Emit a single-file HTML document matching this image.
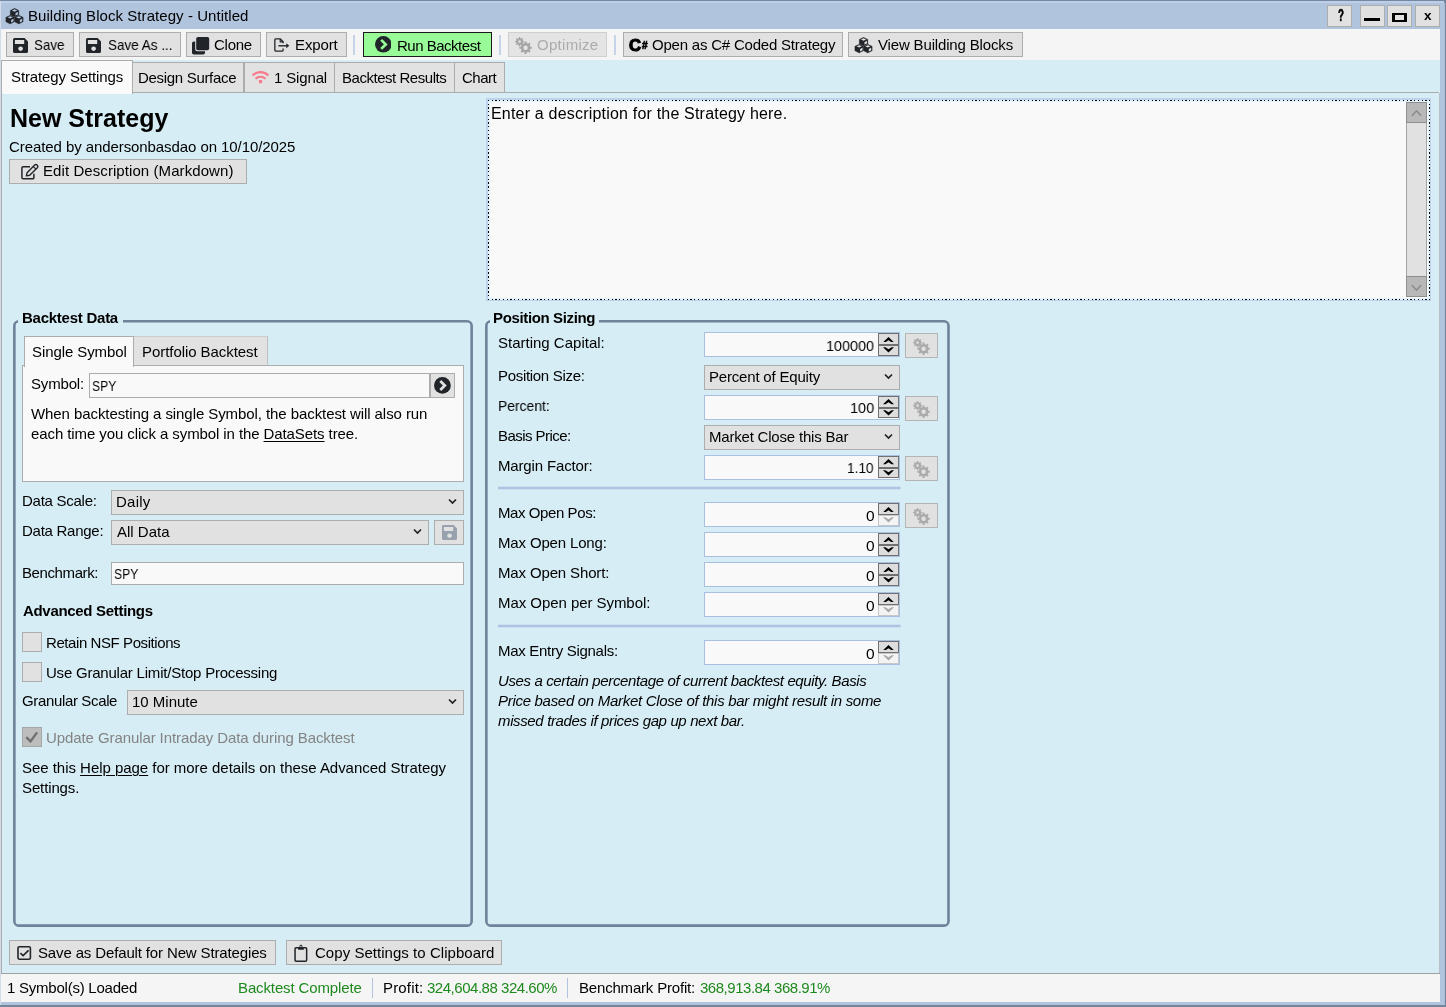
<!DOCTYPE html>
<html lang="en"><head><meta charset="utf-8"><title>Building Block Strategy - Untitled</title>
<style>
html,body{margin:0;padding:0;}
body{width:1446px;height:1007px;overflow:hidden;position:relative;background:#D6EDF5;font-family:"Liberation Sans",sans-serif;font-size:15px;color:#000;}
.b{position:absolute;box-sizing:border-box;}
.t{position:absolute;white-space:pre;will-change:transform;}
u{text-decoration:underline;text-underline-offset:2px;text-decoration-thickness:1px;}
</style></head><body>
<div class="b" style="left:0px;top:0px;width:1446px;height:1007px;background:#B0C4DE;"></div>
<div class="b" style="left:0px;top:0px;width:1446px;height:1px;background:#7388A3;"></div>
<div class="b" style="left:1px;top:1px;width:1444px;height:2px;background:#BDCEE6;"></div>
<div class="b" style="left:0px;top:1005px;width:1446px;height:2px;background:#74859B;"></div>
<div class="b" style="left:0px;top:1px;width:1px;height:1004px;background:#D3DCEA;"></div>
<div class="b" style="left:1444px;top:1px;width:1px;height:1004px;background:#A9BCD8;"></div>
<div class="b" style="left:1445px;top:1px;width:1px;height:1004px;background:#74859B;"></div>
<div class="b" style="left:1444px;top:0px;width:2px;height:3px;background:#74859B;"></div>
<div class="b" style="left:1px;top:29px;width:1439px;height:31px;background:#F5F5F5;"></div>
<div class="b" style="left:1px;top:60px;width:1439px;height:914px;background:#D6EDF5;"></div>
<div class="b" style="left:1px;top:974px;width:1439px;height:28px;background:#F5F5F5;"></div>
<div class="b" style="left:1px;top:973px;width:1439px;height:1px;background:#A0A0A0;"></div>
<svg class="b" style="left:5px;top:8.2px;" width="19" height="17" viewBox="0 0 19 17"><polygon points="9.55,0.30 13.85,2.40 13.85,6.90 9.55,9.00 5.25,6.90 5.25,2.40" fill="#212529" stroke="#212529" stroke-width="0.3" stroke-linejoin="round"/><polygon points="9.55,1.30 12.15,2.45 9.55,3.65 6.95,2.45" fill="#B0C4DE"/><polygon points="10.50,5.20 12.90,3.75 12.90,6.40 10.50,7.55" fill="#B0C4DE"/><polygon points="5.15,7.20 9.45,9.30 9.45,13.80 5.15,15.90 0.85,13.80 0.85,9.30" fill="#212529" stroke="#212529" stroke-width="0.3" stroke-linejoin="round"/><polygon points="5.15,8.20 7.75,9.35 5.15,10.55 2.55,9.35" fill="#B0C4DE"/><polygon points="6.10,12.10 8.50,10.65 8.50,13.30 6.10,14.45" fill="#B0C4DE"/><polygon points="13.85,7.20 18.15,9.30 18.15,13.80 13.85,15.90 9.55,13.80 9.55,9.30" fill="#212529" stroke="#212529" stroke-width="0.3" stroke-linejoin="round"/><polygon points="13.85,8.20 16.45,9.35 13.85,10.55 11.25,9.35" fill="#B0C4DE"/><polygon points="14.80,12.10 17.20,10.65 17.20,13.30 14.80,14.45" fill="#B0C4DE"/></svg>
<div class="b" style="left:1327px;top:5px;width:25px;height:22px;background:#E1E1E1;border:1px solid #ADADAD;"></div>
<div class="b" style="left:1360px;top:5px;width:25px;height:22px;background:#E1E1E1;border:1px solid #ADADAD;"></div>
<div class="b" style="left:1387px;top:5px;width:25px;height:22px;background:#E1E1E1;border:1px solid #ADADAD;"></div>
<div class="b" style="left:1415px;top:5px;width:25px;height:22px;background:#E1E1E1;border:1px solid #ADADAD;"></div>
<div class="b" style="left:1364px;top:18px;width:16px;height:3px;background:#000;"></div>
<div class="b" style="left:1392px;top:13px;width:15px;height:9px;border:3px solid #000;border-top-width:2.5px;border-bottom-width:2.5px;"></div>
<div class="b" style="left:6px;top:32px;width:68px;height:25px;background:#E1E1E1;border:1px solid #ADADAD;"></div>
<svg class="b" style="left:13px;top:37.9px;" width="15" height="15" viewBox="0 0 15 15"><path fill="#212529" fill-rule="evenodd" d="M1.6 0h10.000L15 3.400v10a1.6 1.6 0 0 1-1.6 1.6H1.6A1.6 1.6 0 0 1 0 13.400V1.6A1.6 1.6 0 0 1 1.600 0zM1.900 2.100v3.900h9.300v-3.900zM7.600 8.400a2.300 2.300 0 1 0 0.001 0z"/></svg>
<div class="b" style="left:79px;top:32px;width:102px;height:25px;background:#E1E1E1;border:1px solid #ADADAD;"></div>
<svg class="b" style="left:86px;top:37.9px;" width="15" height="15" viewBox="0 0 15 15"><path fill="#212529" fill-rule="evenodd" d="M1.6 0h10.000L15 3.400v10a1.6 1.6 0 0 1-1.6 1.6H1.6A1.6 1.6 0 0 1 0 13.400V1.6A1.6 1.6 0 0 1 1.600 0zM1.900 2.100v3.900h9.300v-3.900zM7.600 8.400a2.300 2.300 0 1 0 0.001 0z"/></svg>
<div class="b" style="left:186px;top:32px;width:75px;height:25px;background:#E1E1E1;border:1px solid #ADADAD;"></div>
<svg class="b" style="left:192px;top:36.6px;" width="18" height="18" viewBox="0 0 18 18"><rect x="0" y="4.500" width="13" height="13" rx="1.8" fill="#212529"/><rect x="3.200" y="-1" width="15.500" height="15.200" rx="2.2" fill="#E1E1E1"/><rect x="4.200" y="0" width="13" height="13.200" rx="1.8" fill="#212529"/></svg>
<div class="b" style="left:266px;top:32px;width:81px;height:25px;background:#E1E1E1;border:1px solid #ADADAD;"></div>
<svg class="b" style="left:273px;top:37px;" width="17" height="16" viewBox="0 0 17 16"><path fill="none" stroke="#212529" stroke-width="1.300" stroke-linejoin="round" d="M10.100 6.200V4.700L7.400 1.950H2.600a0.750 0.750 0 0 0-0.750 0.750V13.300a0.750 0.750 0 0 0 0.750 0.750h6.750a0.750 0.750 0 0 0 0.750-0.750V11.400"/><path fill="none" stroke="#212529" stroke-width="1.100" d="M7.200 2v2.900h2.900"/><path fill="none" stroke="#212529" stroke-width="1.400" d="M5.400 8.800h9"/><path fill="#212529" d="M13.300 6.300l3 2.500-3 2.500z"/></svg>
<div class="b" style="left:353px;top:35px;width:2px;height:20px;background:#C6D4E9;"></div>
<div class="b" style="left:363px;top:32px;width:129px;height:25px;background:#98FB98;border:1px solid #1A1A1A;"></div>
<svg class="b" style="left:374.6px;top:36.2px;" width="16.6" height="16.6" viewBox="0 0 16.6 16.6"><circle cx="8.300" cy="8.300" r="8.300" fill="#212529"/><path fill="none" stroke="#98FB98" stroke-width="2.700" d="M6.200 3.900l4.500 4.500-4.500 4.500"/></svg>
<div class="b" style="left:499px;top:35px;width:2px;height:20px;background:#C6D4E9;"></div>
<div class="b" style="left:508px;top:32px;width:99px;height:25px;background:#E4E4E4;border:1px solid #CFCFCF;"></div>
<svg class="b" style="left:515px;top:37px;" width="17" height="17" viewBox="0 0 17 17"><path fill="#A6A6A6" fill-rule="evenodd" d="M9.14 3.88 L9.14 5.32 L8.02 5.34 L7.54 6.50 L8.32 7.30 L7.30 8.32 L6.50 7.54 L5.34 8.02 L5.32 9.14 L3.88 9.14 L3.86 8.02 L2.70 7.54 L1.90 8.32 L0.88 7.30 L1.66 6.50 L1.18 5.34 L0.06 5.32 L0.06 3.88 L1.18 3.86 L1.66 2.70 L0.88 1.90 L1.90 0.88 L2.70 1.66 L3.86 1.18 L3.88 0.06 L5.32 0.06 L5.34 1.18 L6.50 1.66 L7.30 0.88 L8.32 1.90 L7.54 2.70 L8.02 3.86ZM5.90 4.60a1.3 1.3 0 1 0 -2.6 0a1.3 1.3 0 1 0 2.6 0Z"/><path fill="#A6A6A6" fill-rule="evenodd" d="M16.82 9.71 L16.82 11.69 L15.29 11.71 L14.63 13.30 L15.70 14.40 L14.30 15.80 L13.20 14.73 L11.61 15.39 L11.59 16.92 L9.61 16.92 L9.59 15.39 L8.00 14.73 L6.90 15.80 L5.50 14.40 L6.57 13.30 L5.91 11.71 L4.38 11.69 L4.38 9.71 L5.91 9.69 L6.57 8.10 L5.50 7.00 L6.90 5.60 L8.00 6.67 L9.59 6.01 L9.61 4.48 L11.59 4.48 L11.61 6.01 L13.20 6.67 L14.30 5.60 L15.70 7.00 L14.63 8.10 L15.29 9.69ZM12.80 10.70a2.2 2.2 0 1 0 -4.4 0a2.2 2.2 0 1 0 4.4 0Z"/></svg>
<div class="b" style="left:613.5px;top:35px;width:2px;height:20px;background:#C6D4E9;"></div>
<div class="b" style="left:623px;top:32px;width:220px;height:25px;background:#E1E1E1;border:1px solid #ADADAD;"></div>
<div class="b" style="left:848px;top:32px;width:175px;height:25px;background:#E1E1E1;border:1px solid #ADADAD;"></div>
<svg class="b" style="left:854px;top:37.2px;" width="19" height="17" viewBox="0 0 19 17"><polygon points="9.55,0.30 13.85,2.40 13.85,6.90 9.55,9.00 5.25,6.90 5.25,2.40" fill="#212529" stroke="#212529" stroke-width="0.3" stroke-linejoin="round"/><polygon points="9.55,1.30 12.15,2.45 9.55,3.65 6.95,2.45" fill="#E1E1E1"/><polygon points="10.50,5.20 12.90,3.75 12.90,6.40 10.50,7.55" fill="#E1E1E1"/><polygon points="5.15,7.20 9.45,9.30 9.45,13.80 5.15,15.90 0.85,13.80 0.85,9.30" fill="#212529" stroke="#212529" stroke-width="0.3" stroke-linejoin="round"/><polygon points="5.15,8.20 7.75,9.35 5.15,10.55 2.55,9.35" fill="#E1E1E1"/><polygon points="6.10,12.10 8.50,10.65 8.50,13.30 6.10,14.45" fill="#E1E1E1"/><polygon points="13.85,7.20 18.15,9.30 18.15,13.80 13.85,15.90 9.55,13.80 9.55,9.30" fill="#212529" stroke="#212529" stroke-width="0.3" stroke-linejoin="round"/><polygon points="13.85,8.20 16.45,9.35 13.85,10.55 11.25,9.35" fill="#E1E1E1"/><polygon points="14.80,12.10 17.20,10.65 17.20,13.30 14.80,14.45" fill="#E1E1E1"/></svg>
<div class="b" style="left:1px;top:92px;width:1438px;height:1px;background:#ACACAC;"></div>
<div class="b" style="left:132px;top:62px;width:112px;height:31px;background:#E2E2E2;border:1px solid #ACACAC;"></div>
<div class="b" style="left:244px;top:62px;width:91px;height:31px;background:#E2E2E2;border:1px solid #ACACAC;"></div>
<div class="b" style="left:334px;top:62px;width:121px;height:31px;background:#E2E2E2;border:1px solid #ACACAC;"></div>
<div class="b" style="left:454px;top:62px;width:51px;height:31px;background:#E2E2E2;border:1px solid #ACACAC;"></div>
<div class="b" style="left:1px;top:60px;width:132px;height:34px;background:#F9F9F9;border:1px solid #ACACAC;border-bottom:none;"></div>
<div class="b" style="left:1px;top:94px;width:1px;height:879px;background:#ACACAC;"></div>
<div class="b" style="left:1439px;top:93px;width:1px;height:880px;background:#B9BFC5;"></div>
<svg class="b" style="left:251px;top:69px;" width="19" height="15" viewBox="0 0 19 15"><g fill="none" stroke="#F7798C" stroke-linecap="butt"><path stroke-width="2.100" d="M1.600 6.400a11.100 11.100 0 0 1 15.800 0"/><path stroke-width="2.100" d="M4.500 9.800a7 7 0 0 1 10 0"/></g><rect x="7.900" y="10.900" width="3.200" height="3.300" rx="0.700" fill="#F7798C"/></svg>
<div class="b" style="left:9px;top:159px;width:238px;height:25px;background:#E1E1E1;border:1px solid #ADADAD;"></div>
<svg class="b" style="left:20px;top:163px;" width="19" height="17" viewBox="0 0 19 17"><path fill="none" stroke="#212529" stroke-width="1.500" stroke-linejoin="round" d="M10 3.700H3.100a1.200 1.200 0 0 0-1.200 1.200V14.500a1.200 1.200 0 0 0 1.200 1.200H12.700a1.200 1.200 0 0 0 1.200-1.200V10.800"/><path fill="none" stroke="#212529" stroke-width="1.400" stroke-linejoin="round" d="M6.400 12.900L7.100 9.700L14.700 2.100a1.840 1.840 0 0 1 2.600 2.600L9.700 12.300Z"/><path fill="none" stroke="#212529" stroke-width="1.100" d="M13.300 3.500l2.600 2.600"/></svg>
<div class="b" style="left:486px;top:98px;width:945px;height:203px;background:#BED2EB;"></div>
<div class="b" style="left:488px;top:100px;width:942px;height:200px;background:#E1F4FC;"></div>
<div class="b" style="left:490px;top:102px;width:938px;height:196px;background:#F9F9F9;"></div>
<div class="b" style="left:488px;top:100px;width:942px;height:1px;background:repeating-linear-gradient(90deg,#000 0 1.25px,transparent 1.25px 3.75px);"></div>
<div class="b" style="left:488px;top:299px;width:942px;height:1px;background:repeating-linear-gradient(90deg,#000 0 1.25px,transparent 1.25px 3.75px);"></div>
<div class="b" style="left:488px;top:100px;width:1px;height:200px;background:repeating-linear-gradient(180deg,#000 0 1.25px,transparent 1.25px 3.75px);"></div>
<div class="b" style="left:1429px;top:100px;width:1px;height:200px;background:repeating-linear-gradient(180deg,#000 0 1.25px,transparent 1.25px 3.75px);"></div>
<div class="b" style="left:1406px;top:102px;width:21px;height:195px;background:#E1E1E1;border:1px solid #A3A3A3;"></div>
<div class="b" style="left:1406px;top:102px;width:21px;height:21px;background:#B8B8B8;border:1px solid #8F8F8F;"></div>
<div class="b" style="left:1406px;top:276px;width:21px;height:21px;background:#B8B8B8;border:1px solid #8F8F8F;"></div>
<svg class="b" style="left:1411px;top:109px;" width="11" height="8" viewBox="0 0 11 8"><path fill="none" stroke="#8A8A8A" stroke-width="1.400" d="M1 6.800l4.500-5 4.500 5"/></svg>
<svg class="b" style="left:1411px;top:283.5px;" width="11" height="8" viewBox="0 0 11 8"><path fill="none" stroke="#8A8A8A" stroke-width="1.400" d="M1 1.200l4.500 5 4.500-5"/></svg>
<svg class="b" style="left:11px;top:318px;" width="464" height="611" viewBox="0 0 464 611"><rect x="3.35" y="3.25" width="457.30" height="604.40" rx="4.5" fill="none" stroke="#70829A" stroke-width="2.600"/></svg>
<div class="b" style="left:18px;top:312px;width:105px;height:20px;background:#D6EDF5;"></div>
<svg class="b" style="left:483px;top:318px;" width="469" height="611" viewBox="0 0 469 611"><rect x="3.35" y="3.25" width="462.15" height="604.40" rx="4.5" fill="none" stroke="#70829A" stroke-width="2.600"/></svg>
<div class="b" style="left:490px;top:312px;width:109px;height:20px;background:#D6EDF5;"></div>
<div class="b" style="left:22px;top:365px;width:442px;height:117px;background:#F9F9F9;border:1px solid #ACACAC;"></div>
<div class="b" style="left:133px;top:336px;width:135px;height:30px;background:#E2E2E2;border:1px solid #C0C0C0;border-bottom-color:#ACACAC;border-top-color:#C8CDD0;"></div>
<div class="b" style="left:24px;top:336px;width:110px;height:31px;background:#F9F9F9;border:1px solid #ACACAC;border-bottom:none;"></div>
<div class="b" style="left:89px;top:373px;width:341px;height:25px;background:#F9F9F9;border:1px solid #ACACAC;"></div>
<div class="b" style="left:430px;top:373px;width:25px;height:25px;background:#E1E1E1;border:1px solid #ADADAD;"></div>
<svg class="b" style="left:434.4px;top:377.4px;" width="16.8" height="16.8" viewBox="0 0 16.6 16.6"><circle cx="8.300" cy="8.300" r="8.300" fill="#212529"/><path fill="none" stroke="#E1E1E1" stroke-width="2.700" d="M6.200 3.900l4.500 4.500-4.500 4.500"/></svg>
<div class="b" style="left:111px;top:490px;width:353px;height:25px;background:#E1E1E1;border:1px solid #ADADAD;"></div>
<svg class="b" style="left:448px;top:498px;" width="9" height="7" viewBox="0 0 9 7"><path fill="none" stroke="#222" stroke-width="1.700" d="M1 1.500l3.500 3.500 3.500-3.500"/></svg>
<div class="b" style="left:111px;top:520px;width:318px;height:25px;background:#E1E1E1;border:1px solid #ADADAD;"></div>
<svg class="b" style="left:413px;top:528px;" width="9" height="7" viewBox="0 0 9 7"><path fill="none" stroke="#222" stroke-width="1.700" d="M1 1.500l3.500 3.500 3.500-3.500"/></svg>
<div class="b" style="left:434px;top:520px;width:30px;height:25px;background:#E1E1E1;border:1px solid #ADADAD;"></div>
<svg class="b" style="left:441.5px;top:524.5px;" width="15" height="15" viewBox="0 0 15 15"><path fill="#98A2AE" fill-rule="evenodd" d="M1.6 0h10.000L15 3.400v10a1.6 1.6 0 0 1-1.6 1.6H1.6A1.6 1.6 0 0 1 0 13.400V1.6A1.6 1.6 0 0 1 1.600 0zM1.900 2.100v3.900h9.300v-3.900zM7.600 8.400a2.300 2.300 0 1 0 0.001 0z"/></svg>
<div class="b" style="left:111px;top:562px;width:353px;height:23px;background:#F9F9F9;border:1px solid #ACACAC;"></div>
<div class="b" style="left:22px;top:632px;width:20px;height:20px;background:#E1E1E1;border:1px solid #ADADAD;"></div>
<div class="b" style="left:22px;top:662px;width:20px;height:20px;background:#E1E1E1;border:1px solid #ADADAD;"></div>
<div class="b" style="left:127px;top:690px;width:337px;height:25px;background:#E1E1E1;border:1px solid #ADADAD;"></div>
<svg class="b" style="left:448px;top:698px;" width="9" height="7" viewBox="0 0 9 7"><path fill="none" stroke="#222" stroke-width="1.700" d="M1 1.500l3.500 3.500 3.500-3.500"/></svg>
<div class="b" style="left:22px;top:727px;width:20px;height:20px;background:#BDBDBD;border:1px solid #A6A6A6;"></div>
<svg class="b" style="left:25px;top:731px;" width="14" height="12" viewBox="0 0 14 12"><path fill="none" stroke="#707070" stroke-width="2.400" d="M1.300 6.200l4.200 4.200 6.600-9"/></svg>
<div class="b" style="left:704px;top:332px;width:196px;height:25px;background:#F9F9F9;border:1px solid #A9C0E0;"></div>
<div class="b" style="left:878px;top:333px;width:21px;height:12px;background:#DDDDDD;border:1px solid #707070;"></div>
<div class="b" style="left:878px;top:345px;width:21px;height:11px;background:#DDDDDD;border:1px solid #707070;"></div>
<svg class="b" style="left:883px;top:336.7px;" width="11" height="5.5" viewBox="0 0 11 5.5"><path fill="#000" d="M0 5.300L5.500 0L11 5.300H8.600L5.500 3.200L2.400 5.300Z"/></svg>
<svg class="b" style="left:883px;top:347px;" width="11" height="5.5" viewBox="0 0 11 5.5"><path fill="#000" d="M0 0.200L5.500 5.500L11 0.200H8.600L5.500 2.300L2.400 0.200Z"/></svg>
<div class="b" style="left:905px;top:333px;width:33px;height:25px;background:#E1E1E1;border:1px solid #B4B4B4;"></div>
<svg class="b" style="left:913px;top:337.5px;" width="17" height="17" viewBox="0 0 17 17"><path fill="#ABABAB" fill-rule="evenodd" d="M9.14 3.88 L9.14 5.32 L8.02 5.34 L7.54 6.50 L8.32 7.30 L7.30 8.32 L6.50 7.54 L5.34 8.02 L5.32 9.14 L3.88 9.14 L3.86 8.02 L2.70 7.54 L1.90 8.32 L0.88 7.30 L1.66 6.50 L1.18 5.34 L0.06 5.32 L0.06 3.88 L1.18 3.86 L1.66 2.70 L0.88 1.90 L1.90 0.88 L2.70 1.66 L3.86 1.18 L3.88 0.06 L5.32 0.06 L5.34 1.18 L6.50 1.66 L7.30 0.88 L8.32 1.90 L7.54 2.70 L8.02 3.86ZM5.90 4.60a1.3 1.3 0 1 0 -2.6 0a1.3 1.3 0 1 0 2.6 0Z"/><path fill="#ABABAB" fill-rule="evenodd" d="M16.82 9.71 L16.82 11.69 L15.29 11.71 L14.63 13.30 L15.70 14.40 L14.30 15.80 L13.20 14.73 L11.61 15.39 L11.59 16.92 L9.61 16.92 L9.59 15.39 L8.00 14.73 L6.90 15.80 L5.50 14.40 L6.57 13.30 L5.91 11.71 L4.38 11.69 L4.38 9.71 L5.91 9.69 L6.57 8.10 L5.50 7.00 L6.90 5.60 L8.00 6.67 L9.59 6.01 L9.61 4.48 L11.59 4.48 L11.61 6.01 L13.20 6.67 L14.30 5.60 L15.70 7.00 L14.63 8.10 L15.29 9.69ZM12.80 10.70a2.2 2.2 0 1 0 -4.4 0a2.2 2.2 0 1 0 4.4 0Z"/></svg>
<div class="b" style="left:704px;top:365px;width:196px;height:25px;background:#E1E1E1;border:1px solid #ADADAD;"></div>
<svg class="b" style="left:884px;top:373px;" width="9" height="7" viewBox="0 0 9 7"><path fill="none" stroke="#222" stroke-width="1.700" d="M1 1.500l3.500 3.500 3.500-3.500"/></svg>
<div class="b" style="left:704px;top:395px;width:196px;height:25px;background:#F9F9F9;border:1px solid #A9C0E0;"></div>
<div class="b" style="left:878px;top:396px;width:21px;height:12px;background:#DDDDDD;border:1px solid #707070;"></div>
<div class="b" style="left:878px;top:407px;width:21px;height:11px;background:#DDDDDD;border:1px solid #707070;border-top-width:2px;"></div>
<svg class="b" style="left:883px;top:399.2px;" width="11" height="5.5" viewBox="0 0 11 5.5"><path fill="#000" d="M0 5.300L5.500 0L11 5.300H8.600L5.500 3.200L2.400 5.300Z"/></svg>
<svg class="b" style="left:883px;top:410.2px;" width="11" height="5.5" viewBox="0 0 11 5.5"><path fill="#000" d="M0 0.200L5.500 5.500L11 0.200H8.600L5.500 2.300L2.400 0.200Z"/></svg>
<div class="b" style="left:905px;top:396px;width:33px;height:25px;background:#E1E1E1;border:1px solid #B4B4B4;"></div>
<svg class="b" style="left:913px;top:400.5px;" width="17" height="17" viewBox="0 0 17 17"><path fill="#ABABAB" fill-rule="evenodd" d="M9.14 3.88 L9.14 5.32 L8.02 5.34 L7.54 6.50 L8.32 7.30 L7.30 8.32 L6.50 7.54 L5.34 8.02 L5.32 9.14 L3.88 9.14 L3.86 8.02 L2.70 7.54 L1.90 8.32 L0.88 7.30 L1.66 6.50 L1.18 5.34 L0.06 5.32 L0.06 3.88 L1.18 3.86 L1.66 2.70 L0.88 1.90 L1.90 0.88 L2.70 1.66 L3.86 1.18 L3.88 0.06 L5.32 0.06 L5.34 1.18 L6.50 1.66 L7.30 0.88 L8.32 1.90 L7.54 2.70 L8.02 3.86ZM5.90 4.60a1.3 1.3 0 1 0 -2.6 0a1.3 1.3 0 1 0 2.6 0Z"/><path fill="#ABABAB" fill-rule="evenodd" d="M16.82 9.71 L16.82 11.69 L15.29 11.71 L14.63 13.30 L15.70 14.40 L14.30 15.80 L13.20 14.73 L11.61 15.39 L11.59 16.92 L9.61 16.92 L9.59 15.39 L8.00 14.73 L6.90 15.80 L5.50 14.40 L6.57 13.30 L5.91 11.71 L4.38 11.69 L4.38 9.71 L5.91 9.69 L6.57 8.10 L5.50 7.00 L6.90 5.60 L8.00 6.67 L9.59 6.01 L9.61 4.48 L11.59 4.48 L11.61 6.01 L13.20 6.67 L14.30 5.60 L15.70 7.00 L14.63 8.10 L15.29 9.69ZM12.80 10.70a2.2 2.2 0 1 0 -4.4 0a2.2 2.2 0 1 0 4.4 0Z"/></svg>
<div class="b" style="left:704px;top:425px;width:196px;height:25px;background:#E1E1E1;border:1px solid #ADADAD;"></div>
<svg class="b" style="left:884px;top:433px;" width="9" height="7" viewBox="0 0 9 7"><path fill="none" stroke="#222" stroke-width="1.700" d="M1 1.500l3.500 3.500 3.500-3.500"/></svg>
<div class="b" style="left:704px;top:455px;width:196px;height:25px;background:#F9F9F9;border:1px solid #A9C0E0;"></div>
<div class="b" style="left:878px;top:456px;width:21px;height:12px;background:#DDDDDD;border:1px solid #707070;"></div>
<div class="b" style="left:878px;top:467px;width:21px;height:11px;background:#DDDDDD;border:1px solid #707070;border-top-width:2px;"></div>
<svg class="b" style="left:883px;top:459.2px;" width="11" height="5.5" viewBox="0 0 11 5.5"><path fill="#000" d="M0 5.300L5.500 0L11 5.300H8.600L5.500 3.200L2.400 5.300Z"/></svg>
<svg class="b" style="left:883px;top:470.2px;" width="11" height="5.5" viewBox="0 0 11 5.5"><path fill="#000" d="M0 0.200L5.500 5.500L11 0.200H8.600L5.500 2.300L2.400 0.200Z"/></svg>
<div class="b" style="left:905px;top:456px;width:33px;height:25px;background:#E1E1E1;border:1px solid #B4B4B4;"></div>
<svg class="b" style="left:913px;top:460.5px;" width="17" height="17" viewBox="0 0 17 17"><path fill="#ABABAB" fill-rule="evenodd" d="M9.14 3.88 L9.14 5.32 L8.02 5.34 L7.54 6.50 L8.32 7.30 L7.30 8.32 L6.50 7.54 L5.34 8.02 L5.32 9.14 L3.88 9.14 L3.86 8.02 L2.70 7.54 L1.90 8.32 L0.88 7.30 L1.66 6.50 L1.18 5.34 L0.06 5.32 L0.06 3.88 L1.18 3.86 L1.66 2.70 L0.88 1.90 L1.90 0.88 L2.70 1.66 L3.86 1.18 L3.88 0.06 L5.32 0.06 L5.34 1.18 L6.50 1.66 L7.30 0.88 L8.32 1.90 L7.54 2.70 L8.02 3.86ZM5.90 4.60a1.3 1.3 0 1 0 -2.6 0a1.3 1.3 0 1 0 2.6 0Z"/><path fill="#ABABAB" fill-rule="evenodd" d="M16.82 9.71 L16.82 11.69 L15.29 11.71 L14.63 13.30 L15.70 14.40 L14.30 15.80 L13.20 14.73 L11.61 15.39 L11.59 16.92 L9.61 16.92 L9.59 15.39 L8.00 14.73 L6.90 15.80 L5.50 14.40 L6.57 13.30 L5.91 11.71 L4.38 11.69 L4.38 9.71 L5.91 9.69 L6.57 8.10 L5.50 7.00 L6.90 5.60 L8.00 6.67 L9.59 6.01 L9.61 4.48 L11.59 4.48 L11.61 6.01 L13.20 6.67 L14.30 5.60 L15.70 7.00 L14.63 8.10 L15.29 9.69ZM12.80 10.70a2.2 2.2 0 1 0 -4.4 0a2.2 2.2 0 1 0 4.4 0Z"/></svg>
<svg class="b" style="left:498px;top:485.4px;" width="403" height="6" viewBox="0 0 403 6"><line x1="0" y1="3" x2="402.5" y2="3" stroke="#AEC3E1" stroke-width="2.300"/></svg>
<div class="b" style="left:704px;top:502px;width:196px;height:25px;background:#F9F9F9;border:1px solid #A9C0E0;"></div>
<div class="b" style="left:878px;top:503px;width:21px;height:12px;background:#DDDDDD;border:1px solid #707070;"></div>
<div class="b" style="left:878px;top:515px;width:21px;height:11px;background:#F4F4F4;border:1px solid #C4C8CC;"></div>
<svg class="b" style="left:883px;top:506.7px;" width="11" height="5.5" viewBox="0 0 11 5.5"><path fill="#000" d="M0 5.300L5.500 0L11 5.300H8.600L5.500 3.200L2.400 5.300Z"/></svg>
<svg class="b" style="left:883px;top:517px;" width="11" height="5.5" viewBox="0 0 11 5.5"><path fill="#A9A9A9" d="M0 0.200L5.500 5.500L11 0.200H8.600L5.500 2.300L2.400 0.200Z"/></svg>
<div class="b" style="left:905px;top:503px;width:33px;height:25px;background:#E1E1E1;border:1px solid #B4B4B4;"></div>
<svg class="b" style="left:913px;top:507.5px;" width="17" height="17" viewBox="0 0 17 17"><path fill="#ABABAB" fill-rule="evenodd" d="M9.14 3.88 L9.14 5.32 L8.02 5.34 L7.54 6.50 L8.32 7.30 L7.30 8.32 L6.50 7.54 L5.34 8.02 L5.32 9.14 L3.88 9.14 L3.86 8.02 L2.70 7.54 L1.90 8.32 L0.88 7.30 L1.66 6.50 L1.18 5.34 L0.06 5.32 L0.06 3.88 L1.18 3.86 L1.66 2.70 L0.88 1.90 L1.90 0.88 L2.70 1.66 L3.86 1.18 L3.88 0.06 L5.32 0.06 L5.34 1.18 L6.50 1.66 L7.30 0.88 L8.32 1.90 L7.54 2.70 L8.02 3.86ZM5.90 4.60a1.3 1.3 0 1 0 -2.6 0a1.3 1.3 0 1 0 2.6 0Z"/><path fill="#ABABAB" fill-rule="evenodd" d="M16.82 9.71 L16.82 11.69 L15.29 11.71 L14.63 13.30 L15.70 14.40 L14.30 15.80 L13.20 14.73 L11.61 15.39 L11.59 16.92 L9.61 16.92 L9.59 15.39 L8.00 14.73 L6.90 15.80 L5.50 14.40 L6.57 13.30 L5.91 11.71 L4.38 11.69 L4.38 9.71 L5.91 9.69 L6.57 8.10 L5.50 7.00 L6.90 5.60 L8.00 6.67 L9.59 6.01 L9.61 4.48 L11.59 4.48 L11.61 6.01 L13.20 6.67 L14.30 5.60 L15.70 7.00 L14.63 8.10 L15.29 9.69ZM12.80 10.70a2.2 2.2 0 1 0 -4.4 0a2.2 2.2 0 1 0 4.4 0Z"/></svg>
<div class="b" style="left:704px;top:532px;width:196px;height:25px;background:#F9F9F9;border:1px solid #A9C0E0;"></div>
<div class="b" style="left:878px;top:533px;width:21px;height:12px;background:#DDDDDD;border:1px solid #707070;"></div>
<div class="b" style="left:878px;top:545px;width:21px;height:11px;background:#DDDDDD;border:1px solid #707070;"></div>
<svg class="b" style="left:883px;top:536.7px;" width="11" height="5.5" viewBox="0 0 11 5.5"><path fill="#000" d="M0 5.300L5.500 0L11 5.300H8.600L5.500 3.200L2.400 5.300Z"/></svg>
<svg class="b" style="left:883px;top:547px;" width="11" height="5.5" viewBox="0 0 11 5.5"><path fill="#000" d="M0 0.200L5.500 5.500L11 0.200H8.600L5.500 2.300L2.400 0.200Z"/></svg>
<div class="b" style="left:704px;top:562px;width:196px;height:25px;background:#F9F9F9;border:1px solid #A9C0E0;"></div>
<div class="b" style="left:878px;top:563px;width:21px;height:12px;background:#DDDDDD;border:1px solid #707070;"></div>
<div class="b" style="left:878px;top:575px;width:21px;height:11px;background:#DDDDDD;border:1px solid #707070;"></div>
<svg class="b" style="left:883px;top:566.7px;" width="11" height="5.5" viewBox="0 0 11 5.5"><path fill="#000" d="M0 5.300L5.500 0L11 5.300H8.600L5.500 3.200L2.400 5.300Z"/></svg>
<svg class="b" style="left:883px;top:577px;" width="11" height="5.5" viewBox="0 0 11 5.5"><path fill="#000" d="M0 0.200L5.500 5.500L11 0.200H8.600L5.500 2.300L2.400 0.200Z"/></svg>
<div class="b" style="left:704px;top:592px;width:196px;height:25px;background:#F9F9F9;border:1px solid #A9C0E0;"></div>
<div class="b" style="left:878px;top:593px;width:21px;height:12px;background:#DDDDDD;border:1px solid #707070;"></div>
<div class="b" style="left:878px;top:605px;width:21px;height:11px;background:#F4F4F4;border:1px solid #C4C8CC;"></div>
<svg class="b" style="left:883px;top:596.7px;" width="11" height="5.5" viewBox="0 0 11 5.5"><path fill="#000" d="M0 5.300L5.500 0L11 5.300H8.600L5.500 3.200L2.400 5.300Z"/></svg>
<svg class="b" style="left:883px;top:607px;" width="11" height="5.5" viewBox="0 0 11 5.5"><path fill="#A9A9A9" d="M0 0.200L5.500 5.500L11 0.200H8.600L5.500 2.300L2.400 0.200Z"/></svg>
<svg class="b" style="left:498px;top:622.6px;" width="403" height="6" viewBox="0 0 403 6"><line x1="0" y1="3" x2="402.5" y2="3" stroke="#AEC3E1" stroke-width="2.300"/></svg>
<div class="b" style="left:704px;top:640px;width:196px;height:25px;background:#F9F9F9;border:1px solid #A9C0E0;"></div>
<div class="b" style="left:878px;top:641px;width:21px;height:12px;background:#DDDDDD;border:1px solid #707070;"></div>
<div class="b" style="left:878px;top:653px;width:21px;height:11px;background:#F4F4F4;border:1px solid #C4C8CC;"></div>
<svg class="b" style="left:883px;top:644.7px;" width="11" height="5.5" viewBox="0 0 11 5.5"><path fill="#000" d="M0 5.300L5.500 0L11 5.300H8.600L5.500 3.200L2.400 5.300Z"/></svg>
<svg class="b" style="left:883px;top:655px;" width="11" height="5.5" viewBox="0 0 11 5.5"><path fill="#A9A9A9" d="M0 0.200L5.500 5.500L11 0.200H8.600L5.500 2.300L2.400 0.200Z"/></svg>
<div class="b" style="left:9px;top:940px;width:267px;height:25px;background:#E1E1E1;border:1px solid #ADADAD;"></div>
<svg class="b" style="left:17px;top:946px;" width="15" height="15" viewBox="0 0 15 15"><rect x="1.000" y="0.800" width="12.400" height="12.400" rx="1.400" fill="none" stroke="#212529" stroke-width="1.600"/><path fill="none" stroke="#212529" stroke-width="1.700" d="M3.400 7.200l2.700 2.400 5.400-5.200"/></svg>
<div class="b" style="left:286px;top:940px;width:216px;height:25px;background:#E1E1E1;border:1px solid #ADADAD;"></div>
<svg class="b" style="left:293px;top:944px;" width="16" height="19" viewBox="0 0 16 19"><rect x="2.050" y="3.650" width="11.600" height="13.500" rx="1.100" fill="none" stroke="#212529" stroke-width="1.500"/><path fill="#212529" fill-rule="evenodd" d="M5.100 5.800V3.500h1.400V2.300a1.450 1.450 0 0 1 2.900 0V3.500h1.400V5.800zM7.950 1.700a0.700 0.700 0 1 0 0.001 0z"/></svg>
<div class="b" style="left:372px;top:978px;width:1px;height:20px;background:#B0C4DE;"></div>
<div class="b" style="left:567px;top:978px;width:1px;height:20px;background:#B0C4DE;"></div>
<span class="t" style="left:28px;top:6px;font-size:15px;line-height:20px;letter-spacing:0.061px;">Building Block Strategy - Untitled</span>
<span class="t" style="left:1338.0px;top:5px;font-size:17px;line-height:22px;font-weight:bold;transform:scaleX(0.57);transform-origin:0 0;-webkit-text-stroke:0.7px #000;">?</span>
<span class="t" style="left:1424px;top:7px;font-size:13.5px;line-height:18.5px;font-weight:bold;">x</span>
<span class="t" style="left:34.11px;top:35px;font-size:15px;line-height:20px;transform:scaleX(0.8939);transform-origin:0 0;">Save</span>
<span class="t" style="left:108.1px;top:35px;font-size:15px;line-height:20px;transform:scaleX(0.9);transform-origin:0 0;">Save As ...</span>
<span class="t" style="left:214px;top:35px;font-size:15px;line-height:20px;letter-spacing:-0.25px;">Clone</span>
<span class="t" style="left:295px;top:35px;font-size:15px;line-height:20px;letter-spacing:-0.12px;">Export</span>
<span class="t" style="left:397px;top:36px;font-size:15px;line-height:20px;letter-spacing:-0.491px;">Run Backtest</span>
<span class="t" style="left:537px;top:35px;font-size:15px;line-height:20px;letter-spacing:0.285px;color:#ABABAB;">Optimize</span>
<span class="t" style="left:629px;top:35px;font-size:16.5px;line-height:21.5px;font-weight:bold;-webkit-text-stroke:1.2px #000;">C</span>
<span class="t" style="left:642px;top:38px;font-size:10px;line-height:15px;font-weight:bold;-webkit-text-stroke:0.6px #000;">#</span>
<span class="t" style="left:652px;top:35px;font-size:15px;line-height:20px;letter-spacing:-0.208px;">Open as C# Coded Strategy</span>
<span class="t" style="left:878px;top:35px;font-size:15px;line-height:20px;letter-spacing:-0.158px;">View Building Blocks</span>
<span class="t" style="left:11px;top:67px;font-size:15px;line-height:20px;letter-spacing:-0.125px;">Strategy Settings</span>
<span class="t" style="left:138px;top:68px;font-size:15px;line-height:20px;letter-spacing:-0.308px;">Design Surface</span>
<span class="t" style="left:274px;top:68px;font-size:15px;line-height:20px;letter-spacing:-0.143px;">1 Signal</span>
<span class="t" style="left:342px;top:68px;font-size:15px;line-height:20px;letter-spacing:-0.466px;">Backtest Results</span>
<span class="t" style="left:462px;top:68px;font-size:15px;line-height:20px;letter-spacing:-0.5px;">Chart</span>
<span class="t" style="left:10px;top:103px;font-size:25px;line-height:30px;font-weight:bold;">New Strategy</span>
<span class="t" style="left:9px;top:137px;font-size:15px;line-height:20px;letter-spacing:-0.079px;">Created by andersonbasdao on 10/10/2025</span>
<span class="t" style="left:43px;top:161px;font-size:15px;line-height:20px;letter-spacing:0.077px;">Edit Description (Markdown)</span>
<span class="t" style="left:491px;top:103px;font-size:16px;line-height:21px;letter-spacing:0.195px;">Enter a description for the Strategy here.</span>
<span class="t" style="left:22px;top:308px;font-size:15px;line-height:20px;letter-spacing:-0.25px;font-weight:bold;">Backtest Data</span>
<span class="t" style="left:493px;top:308px;font-size:15px;line-height:20px;letter-spacing:-0.357px;font-weight:bold;">Position Sizing</span>
<span class="t" style="left:32px;top:342px;font-size:15px;line-height:20px;letter-spacing:-0.084px;">Single Symbol</span>
<span class="t" style="left:142px;top:342px;font-size:15px;line-height:20px;letter-spacing:-0.059px;">Portfolio Backtest</span>
<span class="t" style="left:31px;top:374px;font-size:15px;line-height:20px;letter-spacing:-0.166px;">Symbol:</span>
<span class="t" style="left:92.19px;top:376px;font-size:15px;line-height:20px;transform:scaleX(0.8103);transform-origin:0 0;">SPY</span>
<span class="t" style="left:31px;top:404px;font-size:15px;line-height:20px;letter-spacing:-0.078px;">When backtesting a single Symbol, the backtest will also run</span>
<span class="t" style="left:31px;top:424px;font-size:15px;line-height:20px;letter-spacing:-0.094px;">each time you click a symbol in the <u>DataSets</u> tree.</span>
<span class="t" style="left:22px;top:491px;font-size:15px;line-height:20px;letter-spacing:-0.26px;">Data Scale:</span>
<span class="t" style="left:116px;top:492px;font-size:15px;line-height:20px;letter-spacing:0.25px;">Daily</span>
<span class="t" style="left:22px;top:521px;font-size:15px;line-height:20px;letter-spacing:-0.26px;">Data Range:</span>
<span class="t" style="left:117px;top:522px;font-size:15px;line-height:20px;">All Data</span>
<span class="t" style="left:22px;top:563px;font-size:15px;line-height:20px;letter-spacing:-0.4px;">Benchmark:</span>
<span class="t" style="left:114.19px;top:564px;font-size:15px;line-height:20px;transform:scaleX(0.8103);transform-origin:0 0;">SPY</span>
<span class="t" style="left:23px;top:601px;font-size:15px;line-height:20px;letter-spacing:-0.313px;font-weight:bold;">Advanced Settings</span>
<span class="t" style="left:46px;top:633px;font-size:15px;line-height:20px;letter-spacing:-0.421px;">Retain NSF Positions</span>
<span class="t" style="left:46px;top:663px;font-size:15px;line-height:20px;letter-spacing:-0.212px;">Use Granular Limit/Stop Processing</span>
<span class="t" style="left:22px;top:691px;font-size:15px;line-height:20px;letter-spacing:-0.354px;">Granular Scale</span>
<span class="t" style="left:132px;top:692px;font-size:15px;line-height:20px;letter-spacing:-0.001px;">10 Minute</span>
<span class="t" style="left:46px;top:728px;font-size:15px;line-height:20px;letter-spacing:-0.091px;color:#838383;">Update Granular Intraday Data during Backtest</span>
<span class="t" style="left:22px;top:758px;font-size:15px;line-height:20px;letter-spacing:-0.033px;">See this <u>Help page</u> for more details on these Advanced Strategy</span>
<span class="t" style="left:22px;top:778px;font-size:15px;line-height:20px;letter-spacing:-0.125px;">Settings.</span>
<span class="t" style="left:498px;top:333px;font-size:15px;line-height:20px;">Starting Capital:</span>
<span class="t" style="left:826.37px;top:336px;font-size:15.5px;line-height:20.5px;transform:scaleX(0.93);transform-origin:0 0;">100000</span>
<span class="t" style="left:498px;top:366px;font-size:15px;line-height:20px;letter-spacing:-0.308px;">Position Size:</span>
<span class="t" style="left:709px;top:367px;font-size:15px;line-height:20px;letter-spacing:-0.188px;">Percent of Equity</span>
<span class="t" style="left:498.07px;top:396px;font-size:15px;line-height:20px;transform:scaleX(0.9259);transform-origin:0 0;">Percent:</span>
<span class="t" style="left:850.36px;top:398px;font-size:15.5px;line-height:20.5px;transform:scaleX(0.9375);transform-origin:0 0;">100</span>
<span class="t" style="left:498px;top:426px;font-size:15px;line-height:20px;letter-spacing:-0.545px;">Basis Price:</span>
<span class="t" style="left:709px;top:427px;font-size:15px;line-height:20px;letter-spacing:-0.2px;">Market Close this Bar</span>
<span class="t" style="left:498px;top:456px;font-size:15px;line-height:20px;letter-spacing:-0.154px;">Margin Factor:</span>
<span class="t" style="left:847.42px;top:458px;font-size:15.5px;line-height:20.5px;transform:scaleX(0.8793);transform-origin:0 0;">1.10</span>
<span class="t" style="left:498px;top:503px;font-size:15px;line-height:20px;letter-spacing:-0.417px;">Max Open Pos:</span>
<span class="t" style="left:866px;top:506px;font-size:15.5px;line-height:20.5px;">0</span>
<span class="t" style="left:498px;top:533px;font-size:15px;line-height:20px;letter-spacing:-0.154px;">Max Open Long:</span>
<span class="t" style="left:866px;top:536px;font-size:15.5px;line-height:20.5px;">0</span>
<span class="t" style="left:498px;top:563px;font-size:15px;line-height:20px;letter-spacing:-0.143px;">Max Open Short:</span>
<span class="t" style="left:866px;top:566px;font-size:15.5px;line-height:20.5px;">0</span>
<span class="t" style="left:498px;top:593px;font-size:15px;line-height:20px;letter-spacing:-0.053px;">Max Open per Symbol:</span>
<span class="t" style="left:866px;top:596px;font-size:15.5px;line-height:20.5px;">0</span>
<span class="t" style="left:498px;top:641px;font-size:15px;line-height:20px;letter-spacing:-0.294px;">Max Entry Signals:</span>
<span class="t" style="left:866px;top:644px;font-size:15.5px;line-height:20.5px;">0</span>
<span class="t" style="left:498px;top:671px;font-size:15px;line-height:20px;letter-spacing:-0.379px;font-style:italic;">Uses a certain percentage of current backtest equity. Basis</span>
<span class="t" style="left:498px;top:691px;font-size:15px;line-height:20px;letter-spacing:-0.298px;font-style:italic;">Price based on Market Close of this bar might result in some</span>
<span class="t" style="left:498px;top:711px;font-size:15px;line-height:20px;letter-spacing:-0.364px;font-style:italic;">missed trades if prices gap up next bar.</span>
<span class="t" style="left:38px;top:943px;font-size:15px;line-height:20px;letter-spacing:-0.139px;">Save as Default for New Strategies</span>
<span class="t" style="left:315px;top:943px;font-size:15px;line-height:20px;letter-spacing:0.04px;">Copy Settings to Clipboard</span>
<span class="t" style="left:7px;top:978px;font-size:15px;line-height:20px;letter-spacing:-0.235px;">1 Symbol(s) Loaded</span>
<span class="t" style="left:238px;top:978px;font-size:15px;line-height:20px;letter-spacing:-0.125px;color:#1E8A1E;">Backtest Complete</span>
<span class="t" style="left:383px;top:978px;font-size:15px;line-height:20px;letter-spacing:0.167px;">Profit:</span>
<span class="t" style="left:427px;top:978px;font-size:15px;line-height:20px;letter-spacing:-0.471px;color:#1E8A1E;">324,604.88 324.60%</span>
<span class="t" style="left:579px;top:978px;font-size:15px;line-height:20px;letter-spacing:-0.188px;">Benchmark Profit:</span>
<span class="t" style="left:700px;top:978px;font-size:15px;line-height:20px;letter-spacing:-0.471px;color:#1E8A1E;">368,913.84 368.91%</span>
</body></html>
